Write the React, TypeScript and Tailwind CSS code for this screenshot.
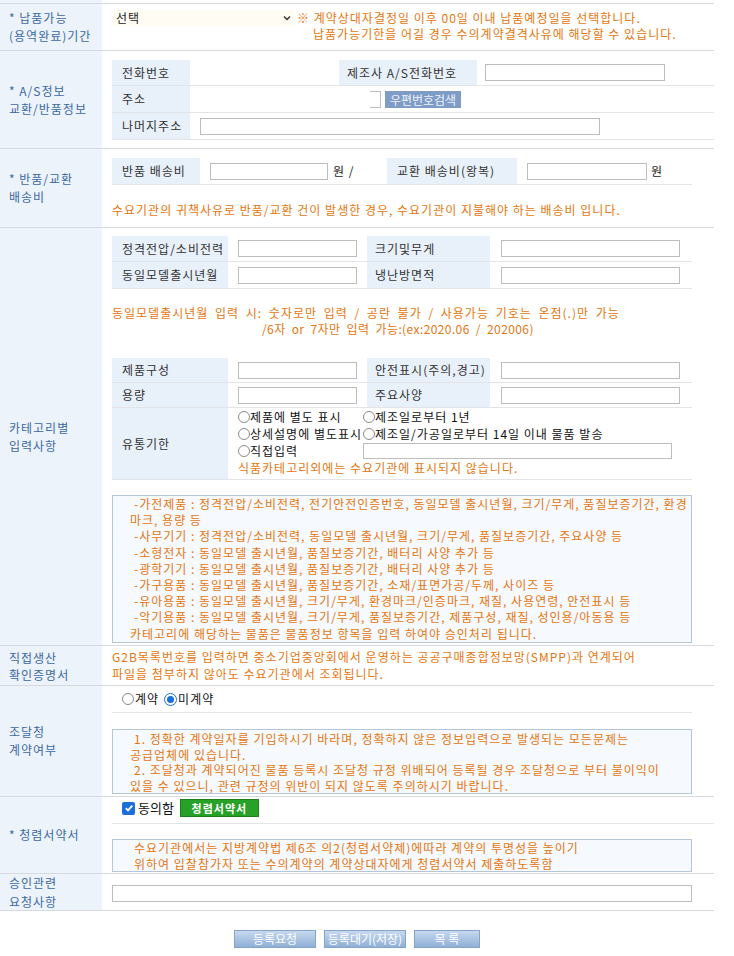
import React from "react";

const ORANGE = "text-[#e4760f]";

function Field({ className = "" }: { className?: string }) {
  return <span className={"block h-[17px] shrink-0 border border-[#bdbdbd] bg-white " + className} />;
}

function Radio({ checked = false }: { checked?: boolean }) {
  if (checked) {
    return (
      <span className="inline-flex h-[13px] w-[13px] shrink-0 items-center justify-center rounded-full border border-[#1a6fdc] bg-white">
        <span className="h-[7px] w-[7px] rounded-full bg-[#1a6fdc]" />
      </span>
    );
  }
  return <span className="inline-block h-[12px] w-[12px] shrink-0 rounded-full border border-[#8a8a8a] bg-white" />;
}

function Row({
  label,
  className,
  labelLeading = "leading-[18px]",
  children,
}: {
  label: React.ReactNode;
  className: string;
  labelLeading?: string;
  children?: React.ReactNode;
}) {
  return (
    <div className={"flex border-b border-[#d6dadf] " + className}>
      <div className={"flex w-[102px] shrink-0 items-center bg-[#edf3fa] pl-[9px] text-[#3a69a3] " + labelLeading}>
        <div>{label}</div>
      </div>
      <div className="min-w-0 flex-1 pl-[10px]">{children}</div>
    </div>
  );
}

function Th({ className, children }: { className: string; children: React.ReactNode }) {
  return (
    <div className={"flex shrink-0 items-center self-stretch whitespace-nowrap bg-[#e8f0fa] text-[#333] " + className}>
      {children}
    </div>
  );
}

function Box({ className, children }: { className: string; children: React.ReactNode }) {
  return (
    <div className={"w-[580px] whitespace-nowrap border border-[#b4c6d8] bg-[#f6f9fd] " + ORANGE + " " + className}>
      {children}
    </div>
  );
}

export default function App() {
  return (
    <div className="min-h-[956px] w-[734px] bg-white font-['Noto_Sans_CJK_KR','Noto_Sans',sans-serif] text-[12px] tracking-[1px]">
      <div className="w-[714px]">
        {/* 위쪽 여백 */}
        <div className="flex h-[4px] border-b border-[#d6dadf]">
          <div className="w-[102px] bg-[#edf3fa]" />
        </div>

        {/* 납품가능기간 */}
        <Row label={<>* 납품가능<br />(용역완료)기간</>} className="h-[47px]">
          <div className="flex pt-[6px] leading-[16px]">
            <div className="ml-[1px] flex h-[16px] w-[182px] items-center justify-between bg-[#fffdf3] pl-[3px] pr-[4px] text-[#222]">
              <span>선택</span>
              <svg width="8" height="6" viewBox="0 0 8 6" className="text-[#333]">
                <path d="M1 1.5 L4 4.5 L7 1.5" fill="none" stroke="currentColor" strokeWidth="1.5" />
              </svg>
            </div>
            <div className={"ml-[2px] whitespace-nowrap " + ORANGE}>
              <div>※ 계약상대자결정일 이후 00일 이내 납품예정일을 선택합니다.</div>
              <div className="pl-[16px]">납품가능기한을 어길 경우 수의계약결격사유에 해당할 수 있습니다.</div>
            </div>
          </div>
        </Row>

        {/* A/S정보 */}
        <Row label={<>* A/S정보<br />교환/반품정보</>} className="h-[98px]">
          <div className="pt-[9px]">
            <div className="flex h-[26px] items-center border-b border-[#e2e4e7]">
              <Th className="w-[78px] pl-[10px]">전화번호</Th>
              <div className="w-[149px]" />
              <Th className="w-[138px] pl-[8px]">제조사 A/S전화번호</Th>
              <Field className="ml-[8px] w-[180px]" />
            </div>
            <div className="flex h-[27px] items-center border-b border-[#e2e4e7]">
              <Th className="w-[78px] pl-[10px]">주소</Th>
              <span className="ml-[180px] block h-[17px] w-[11px] border-y border-r border-[#bdbdbd] bg-white" />
              <button className="ml-[4px] h-[17px] w-[76px] bg-[#7f9cc6] text-[12px] leading-[17px] tracking-normal text-[#eef3fa]">
                우편번호검색
              </button>
            </div>
            <div className="flex h-[27px] items-center border-b border-[#e2e4e7]">
              <Th className="w-[78px] pl-[10px]">나머지주소</Th>
              <Field className="ml-[10px] w-[400px]" />
            </div>
          </div>
        </Row>

        {/* 반품/교환 배송비 */}
        <Row label={<>* 반품/교환<br />배송비</>} className="h-[79px]">
          <div className="pt-[9px]">
            <div className="flex h-[27px] w-[580px] items-center border-b border-[#e2e4e7]">
              <Th className="w-[88px] pl-[10px]">반품 배송비</Th>
              <div className="flex w-[187px] items-center">
                <Field className="ml-[10px] w-[118px]" />
                <span className="ml-[5px] text-[#222]">원 /</span>
              </div>
              <Th className="w-[130px] pl-[10px]">교환 배송비(왕복)</Th>
              <Field className="ml-[10px] w-[120px]" />
              <span className="ml-[4px] text-[#222]">원</span>
            </div>
            <div className={"mt-[17px] whitespace-nowrap leading-[16px] " + ORANGE}>
              수요기관의 귀책사유로 반품/교환 건이 발생한 경우, 수요기관이 지불해야 하는 배송비 입니다.
            </div>
          </div>
        </Row>

        {/* 카테고리별 입력사항 */}
        <Row label={<>카테고리별<br />입력사항</>} className="h-[418px]">
          <div className="pt-[8px]">
            <div className="w-[580px]">
              <div className="flex h-[26px] items-center border-b border-[#e2e4e7]">
                <Th className="w-[116px] pl-[10px]">정격전압/소비전력</Th>
                <div className="w-[139px]">
                  <Field className="ml-[10px] w-[119px]" />
                </div>
                <Th className="w-[123px] pl-[8px]">크기및무게</Th>
                <Field className="ml-[11px] w-[179px]" />
              </div>
              <div className="flex h-[27px] items-center border-b border-[#e2e4e7]">
                <Th className="w-[116px] pl-[10px]">동일모델출시년월</Th>
                <div className="w-[139px]">
                  <Field className="ml-[10px] w-[119px]" />
                </div>
                <Th className="w-[123px] pl-[8px]">냉난방면적</Th>
                <Field className="ml-[11px] w-[179px]" />
              </div>
            </div>

            <div className={"mt-[16px] whitespace-nowrap leading-[16px] [word-spacing:3px] " + ORANGE}>
              <div>동일모델출시년월 입력 시: 숫자로만 입력 / 공란 불가 / 사용가능 기호는 온점(.)만 가능</div>
              <div className="pl-[150px] tracking-[0.4px]">/6자 or 7자만 입력 가능:(ex:2020.06 / 202006)</div>
            </div>

            <div className="mt-[21px] w-[580px]">
              <div className="flex h-[25px] items-center border-b border-[#e2e4e7]">
                <Th className="w-[116px] pl-[10px]">제품구성</Th>
                <div className="w-[139px]">
                  <Field className="ml-[10px] w-[119px]" />
                </div>
                <Th className="w-[123px] pl-[8px]">안전표시(주의,경고)</Th>
                <Field className="ml-[11px] w-[179px]" />
              </div>
              <div className="flex h-[25px] items-center border-b border-[#e2e4e7]">
                <Th className="w-[116px] pl-[10px]">용량</Th>
                <div className="w-[139px]">
                  <Field className="ml-[10px] w-[119px]" />
                </div>
                <Th className="w-[123px] pl-[8px]">주요사양</Th>
                <Field className="ml-[11px] w-[179px]" />
              </div>
              <div className="flex h-[72px] border-b border-[#e2e4e7]">
                <Th className="w-[116px] pl-[10px]">유통기한</Th>
                <div className="flex flex-col whitespace-nowrap pl-[10px] leading-[17px] text-[#111]">
                  <div className="flex items-center">
                    <div className="flex w-[125px] items-center">
                      <Radio />
                      <span>제품에 별도 표시</span>
                    </div>
                    <Radio />
                    <span>제조일로부터 1년</span>
                  </div>
                  <div className="flex items-center">
                    <div className="flex w-[125px] items-center">
                      <Radio />
                      <span>상세설명에 별도표시</span>
                    </div>
                    <Radio />
                    <span>제조일/가공일로부터 14일 이내 물품 발송</span>
                  </div>
                  <div className="flex h-[17px] items-center">
                    <div className="flex w-[125px] items-center">
                      <Radio />
                      <span>직접입력</span>
                    </div>
                    <span className="block h-[16px] w-[309px] border border-[#bdbdbd] bg-white" />
                  </div>
                  <div className={ORANGE}>식품카테고리외에는 수요기관에 표시되지 않습니다.</div>
                </div>
              </div>
            </div>

            <Box className="mt-[15px] h-[148px] pl-[17px] leading-[16.2px]">
              <div className="pl-[4px]">-가전제품 : 정격전압/소비전력, 전기안전인증번호, 동일모델 출시년월, 크기/무게, 품질보증기간, 환경</div>
              <div>마크, 용량 등</div>
              <div className="pl-[4px]">-사무기기 : 정격전압/소비전력, 동일모델 출시년월, 크기/무게, 품질보증기간, 주요사양 등</div>
              <div className="pl-[4px]">-소형전자 : 동일모델 출시년월, 품질보증기간, 배터리 사양 추가 등</div>
              <div className="pl-[4px]">-광학기기 : 동일모델 출시년월, 품질보증기간, 배터리 사양 추가 등</div>
              <div className="pl-[4px]">-가구용품 : 동일모델 출시년월, 품질보증기간, 소재/표면가공/두께, 사이즈 등</div>
              <div className="pl-[4px]">-유아용품 : 동일모델 출시년월, 크기/무게, 환경마크/인증마크, 재질, 사용연령, 안전표시 등</div>
              <div className="pl-[4px]">-악기용품 : 동일모델 출시년월, 크기/무게, 품질보증기간, 제품구성, 재질, 성인용/아동용 등</div>
              <div>카테고리에 해당하는 물품은 물품정보 항목을 입력 하여야 승인처리 됩니다.</div>
            </Box>
          </div>
        </Row>

        {/* 직접생산 확인증명서 */}
        <Row label={<>직접생산<br />확인증명서</>} className="h-[40px]" labelLeading="leading-[17px]">
          <div className={"whitespace-nowrap pt-[2px] leading-[17px] " + ORANGE}>
            <div>G2B목록번호를 입력하면 중소기업중앙회에서 운영하는 공공구매종합정보망(SMPP)과 연계되어</div>
            <div>파일을 첨부하지 않아도 수요기관에서 조회됩니다.</div>
          </div>
        </Row>

        {/* 조달청 계약여부 */}
        <Row label={<>조달청<br />계약여부</>} className="h-[111px]">
          <div className="flex h-[27px] w-[580px] items-center border-b border-[#e2e4e7] pl-[10px] text-[#111]">
            <Radio />
            <span className="ml-[1px]">계약</span>
            <span className="ml-[5px]" />
            <Radio checked />
            <span className="ml-[1px]">미계약</span>
          </div>
          <Box className="mt-[16px] h-[65px] pl-[17px] pt-[1px] leading-[15.5px]">
            <div className="pl-[4px]">1. 정확한 계약일자를 기입하시기 바라며, 정확하지 않은 정보입력으로 발생되는 모든문제는</div>
            <div>공급업체에 있습니다.</div>
            <div className="pl-[4px]">2. 조달청과 계약되어진 물품 등록시 조달청 규정 위배되어 등록될 경우 조달청으로 부터 불이익이</div>
            <div>있을 수 있으니, 관련 규정의 위반이 되지 않도록 주의하시기 바랍니다.</div>
          </Box>
        </Row>

        {/* 청렴서약서 */}
        <Row label="* 청렴서약서" className="h-[77px]">
          <div className="flex h-[27px] items-center border-b border-[#e2e4e7] pb-[4px] pl-[10px]">
            <span className="flex h-[13px] w-[13px] items-center justify-center rounded-[2px] bg-[#1a6fdc]">
              <svg width="10" height="10" viewBox="0 0 10 10">
                <path d="M1.8 5.2 L4 7.4 L8.3 2.6" fill="none" stroke="white" strokeWidth="1.8" />
              </svg>
            </span>
            <span className="ml-[3px] text-[13px] tracking-normal text-[#111]">동의함</span>
            <button className="ml-[6px] h-[18px] w-[79px] border border-[#1e7e1e] bg-[#27a127] text-[11px] font-bold leading-[16px] tracking-[1px] text-white">
              청렴서약서
            </button>
          </div>
          <Box className="mt-[15px] h-[33px] pl-[21px] leading-[15.5px]">
            <div>수요기관에서는 지방계약법 제6조 의2(청렴서약제)에따라 계약의 투명성을 높이기</div>
            <div>위하여 입찰참가자 또는 수의계약의 계약상대자에게 청렴서약서 제출하도록함</div>
          </Box>
        </Row>

        {/* 승인관련 요청사항 */}
        <Row label={<>승인관련<br />요청사항</>} className="h-[37px]" labelLeading="leading-[19px]">
          <Field className="mt-[11px] w-[580px]" />
        </Row>

        {/* 버튼 */}
        <div className="flex justify-center gap-[8px] pt-[19px] tracking-normal">
          <button className="h-[18px] w-[82px] border border-[#86a4c9] bg-linear-to-b from-[#c6d8ee] to-[#8fb0d6] text-[12px] leading-[16px] text-white">
            등록요청
          </button>
          <button className="h-[18px] w-[82px] border border-[#86a4c9] bg-linear-to-b from-[#c6d8ee] to-[#8fb0d6] text-[12px] leading-[16px] text-white">
            등록대기(저장)
          </button>
          <button className="h-[18px] w-[66px] border border-[#86a4c9] bg-linear-to-b from-[#c6d8ee] to-[#8fb0d6] text-[12px] leading-[16px] text-white">
            목 록
          </button>
        </div>
      </div>
    </div>
  );
}
